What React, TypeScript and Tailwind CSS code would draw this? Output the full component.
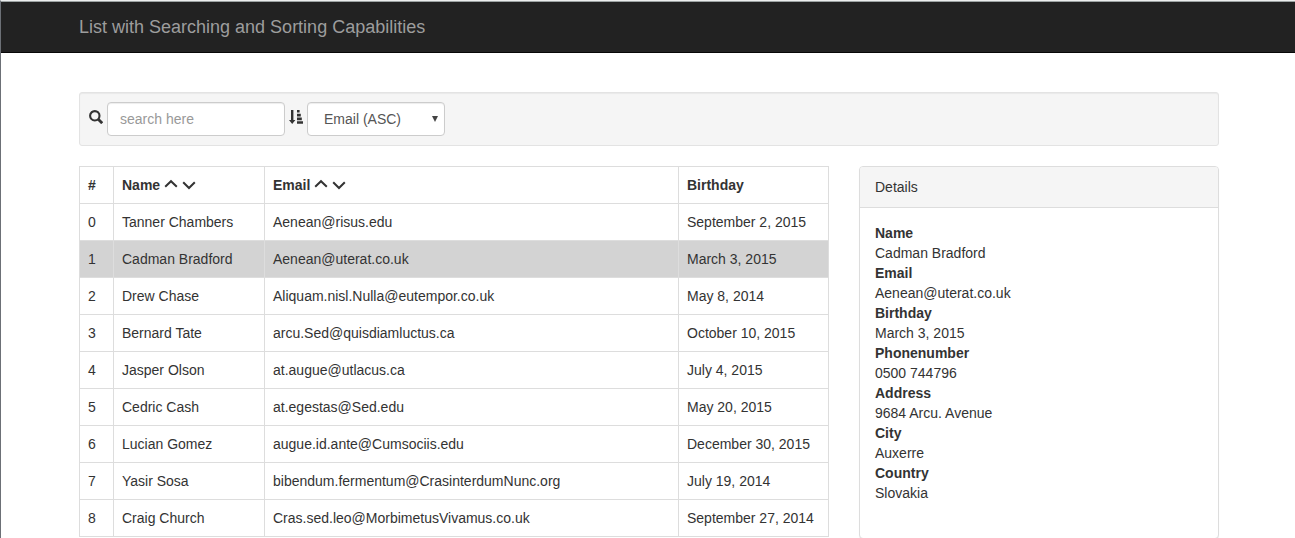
import { useState } from "react";

type Person = { name: string; email: string; birthday: string };

const people: Person[] = [
  { name: "Tanner Chambers", email: "Aenean@risus.edu", birthday: "September 2, 2015" },
  { name: "Cadman Bradford", email: "Aenean@uterat.co.uk", birthday: "March 3, 2015" },
  { name: "Drew Chase", email: "Aliquam.nisl.Nulla@eutempor.co.uk", birthday: "May 8, 2014" },
  { name: "Bernard Tate", email: "arcu.Sed@quisdiamluctus.ca", birthday: "October 10, 2015" },
  { name: "Jasper Olson", email: "at.augue@utlacus.ca", birthday: "July 4, 2015" },
  { name: "Cedric Cash", email: "at.egestas@Sed.edu", birthday: "May 20, 2015" },
  { name: "Lucian Gomez", email: "augue.id.ante@Cumsociis.edu", birthday: "December 30, 2015" },
  { name: "Yasir Sosa", email: "bibendum.fermentum@CrasinterdumNunc.org", birthday: "July 19, 2014" },
  { name: "Craig Church", email: "Cras.sed.leo@MorbimetusVivamus.co.uk", birthday: "September 27, 2014" },
];

const details = [
  ["Name", "Cadman Bradford"],
  ["Email", "Aenean@uterat.co.uk"],
  ["Birthday", "March 3, 2015"],
  ["Phonenumber", "0500 744796"],
  ["Address", "9684 Arcu. Avenue"],
  ["City", "Auxerre"],
  ["Country", "Slovakia"],
];

function SearchIcon() {
  return (
    <svg viewBox="0 0 14 14" className="size-3.5" fill="none" stroke="currentColor" aria-hidden="true">
      <circle cx="5.8" cy="5.8" r="4.7" strokeWidth="2.1" />
      <path d="M9 9 13.2 13.2" strokeWidth="2.8" />
    </svg>
  );
}

function SortIcon() {
  return (
    <svg viewBox="0 0 14 14" className="size-3.5" fill="currentColor" aria-hidden="true">
      <path d="M2 0h2.4v10H6.4L3.2 14 0 10h2z" />
      <path d="M8 0h2.6v2.6H8zM8 3.8h3.8v2.6H8zM8 7.6h4.8v2.6H8zM8 11.2h6v2.6H8z" />
    </svg>
  );
}

function Chevron({ down = false }: { down?: boolean }) {
  return (
    <svg viewBox="0 0 14 14" className="size-3.5" fill="none" stroke="currentColor" strokeWidth="2" aria-hidden="true">
      <path d={down ? "M1.2 4.2 7 10 12.8 4.2" : "M1.2 8.8 7 3.2 12.8 8.8"} />
    </svg>
  );
}

function SortableHeading({ label }: { label: string }) {
  return (
    <div className="flex items-center gap-1">
      {label}
      <button type="button" aria-label={`Sort by ${label} ascending`}>
        <Chevron />
      </button>
      <button type="button" aria-label={`Sort by ${label} descending`}>
        <Chevron down />
      </button>
    </div>
  );
}

export default function App() {
  const [query, setQuery] = useState("");
  const cell = "border border-[#ddd] p-2";

  return (
    <div className="h-screen overflow-hidden border-t border-l border-t-[#eceeee] border-l-[#6c7076] bg-white font-['Liberation_Sans',Arial,sans-serif] text-sm leading-5 text-[#333]">
      <header className="border-t border-b border-t-[#9da3a3] border-b-[#080808] bg-[#222] pl-0.5">
        <div className="mx-auto flex h-[50px] max-w-[1140px] items-center">
          <a href="#" className="text-lg leading-5 text-[#9d9d9d]">
            List with Searching and Sorting Capabilities
          </a>
        </div>
      </header>

      <div className="pt-[39px] pl-0.5">
        <main className="mx-auto max-w-[1140px]">
          <form className="flex items-start rounded-[3px] border border-[#e3e3e3] bg-[#f5f5f5] p-[9px] shadow-[inset_0_1px_1px_rgba(0,0,0,0.05)]">
            <label htmlFor="search" aria-label="Search" className="mt-2 mr-1">
              <SearchIcon />
            </label>
            <input
              id="search"
              type="text"
              placeholder="search here"
              value={query}
              onChange={(event) => setQuery(event.target.value)}
              className="h-[34px] w-[178px] rounded border border-[#ccc] bg-white px-3 text-[#555] shadow-[inset_0_1px_1px_rgba(0,0,0,0.075)] placeholder:text-[#999]"
            />
            <label htmlFor="sort" aria-label="Sort by" className="mx-1 mt-2">
              <SortIcon />
            </label>
            <div className="relative">
              <select
                id="sort"
                className="h-[34px] w-[138px] appearance-none rounded border border-[#ccc] bg-white px-4 text-[#555] shadow-[inset_0_1px_1px_rgba(0,0,0,0.075)]"
              >
                <option>Email (ASC)</option>
              </select>
              <svg viewBox="0 0 6 6" className="pointer-events-none absolute top-3.5 right-[7px] size-1.5 fill-[#444]" aria-hidden="true">
                <path d="M0 0h6L3 6z" />
              </svg>
            </div>
          </form>

          <div className="mt-5 grid grid-cols-[25fr_12fr] items-start gap-[30px]">
            <table className="w-full table-fixed border-collapse text-left">
              <thead>
                <tr>
                  <th className={`${cell} w-[34px]`}>#</th>
                  <th className={`${cell} w-[151px]`}>
                    <SortableHeading label="Name" />
                  </th>
                  <th className={cell}>
                    <SortableHeading label="Email" />
                  </th>
                  <th className={`${cell} w-[150px]`}>Birthday</th>
                </tr>
              </thead>
              <tbody>
                {people.map((person, index) => (
                  <tr key={person.email} className={index === 1 ? "bg-[#d3d3d3]" : ""}>
                    <td className={cell}>{index}</td>
                    <td className={cell}>{person.name}</td>
                    <td className={cell}>{person.email}</td>
                    <td className={cell}>{person.birthday}</td>
                  </tr>
                ))}
              </tbody>
            </table>

            <section className="rounded border border-[#ddd] bg-white shadow-[0_1px_1px_rgba(0,0,0,0.05)]">
              <h2 className="rounded-t-[3px] border-b border-[#ddd] bg-[#f5f5f5] px-[15px] py-2.5">Details</h2>
              <dl className="px-[15px] pt-[15px] pb-[35px]">
                {details.map(([term, value]) => (
                  <div key={term}>
                    <dt className="font-bold">{term}</dt>
                    <dd>{value}</dd>
                  </div>
                ))}
              </dl>
            </section>
          </div>
        </main>
      </div>
    </div>
  );
}
